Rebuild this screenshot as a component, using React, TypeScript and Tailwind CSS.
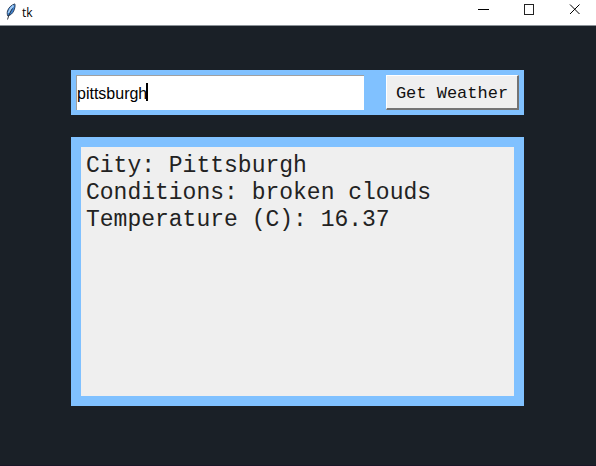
import { useState, type FormEvent } from "react";

const report = [
  "City: Pittsburgh",
  "Conditions: broken clouds",
  "Temperature (C): 16.37",
];

function FeatherIcon() {
  return (
    <svg width="12" height="17" viewBox="0 0 12 17" aria-hidden="true">
      <path
        d="M8.500 1C5.500 2 2.500 4.500 1.500 8c-.5 1.800-.3 3.500.3 5 2.700-.8 4.700-2.500 5.900-5C8.800 5.500 9.300 3 9 1.200Z"
        fill="#3f86d6"
        stroke="#26364d"
        strokeWidth=".9"
      />
      <path d="M7.500 2.500C5 4.500 3.300 7 2.600 10" stroke="#a6cef5" strokeWidth="1.800" fill="none" />
      <path d="M6.500 5.500C4.500 8.500 3 11.500 1.500 16.500" stroke="#20242b" strokeWidth=".9" fill="none" />
    </svg>
  );
}

function TitleBar() {
  return (
    <header className="flex h-[26px] items-start border-b border-[#8b9298] bg-white">
      <div className="flex flex-1 items-center gap-1 pl-1.5 pt-px">
        <FeatherIcon />
        <h1 className="pt-1 font-['Open_Sans','Noto_Sans',sans-serif] text-[12px] leading-4 text-black">
          tk
        </h1>
      </div>
      <button type="button" aria-label="Minimize" className="flex h-[19px] w-[46px] items-center justify-center">
        <svg width="11" height="11" viewBox="0 0 11 11" shapeRendering="crispEdges">
          <path d="M0 5.500H11" stroke="#000" />
        </svg>
      </button>
      <button type="button" aria-label="Maximize" className="flex h-[19px] w-[46px] items-center justify-center">
        <svg width="10" height="11" viewBox="0 0 10 11" shapeRendering="crispEdges">
          <path d="M.5 .5H9.500V10.500H.5Z" fill="none" stroke="#222" />
        </svg>
      </button>
      <button type="button" aria-label="Close" className="flex h-[19px] w-[44px] items-center justify-center">
        <svg width="11" height="11" viewBox="0 0 11 11">
          <path d="M1 .5L10.500 10M10.500 .5L1 10" stroke="#000" />
        </svg>
      </button>
    </header>
  );
}

export default function App() {
  const [city, setCity] = useState("pittsburgh");
  const submit = (event: FormEvent) => event.preventDefault();

  return (
    <div className="flex min-h-screen flex-col border-b border-[#191627] bg-[#1a2027]">
      <TitleBar />
      <main className="flex flex-1 flex-col gap-[22px] pt-11 pr-[72px] pb-[59px] pl-[71px]">
        <form onSubmit={submit} className="flex h-[45px] gap-[22px] bg-[#80c1ff] p-[5px]">
          <div className="relative flex min-w-0 flex-1">
            <input
              type="text"
              aria-label="City"
              value={city}
              onChange={(event) => setCity(event.target.value)}
              className="w-full border-t border-l border-[#a0a0a0] bg-white pt-px font-['Liberation_Sans',Arial,sans-serif] text-[16px] text-black caret-transparent outline-none"
            />
            <span aria-hidden="true" className="absolute top-2 left-[70px] h-[18px] w-0.5 bg-black" />
          </div>
          <button
            type="submit"
            className="w-[133px] border-t border-r-2 border-b-2 border-l border-t-white border-r-[#747474] border-b-[#747474] border-l-white bg-[#efefef] pt-1 font-['Liberation_Mono','Courier_New',monospace] text-[17px] whitespace-nowrap text-[#111]"
          >
            Get Weather
          </button>
        </form>
        <section aria-label="Weather" className="flex flex-1 flex-col bg-[#80c1ff] p-[10px]">
          <div className="flex-1 bg-[#efefef] px-[5px] pt-1.5 font-['Liberation_Mono','Courier_New',monospace] text-[23px] leading-[27px] text-[#222]">
            {report.map((line) => (
              <p key={line}>{line}</p>
            ))}
          </div>
        </section>
      </main>
    </div>
  );
}
